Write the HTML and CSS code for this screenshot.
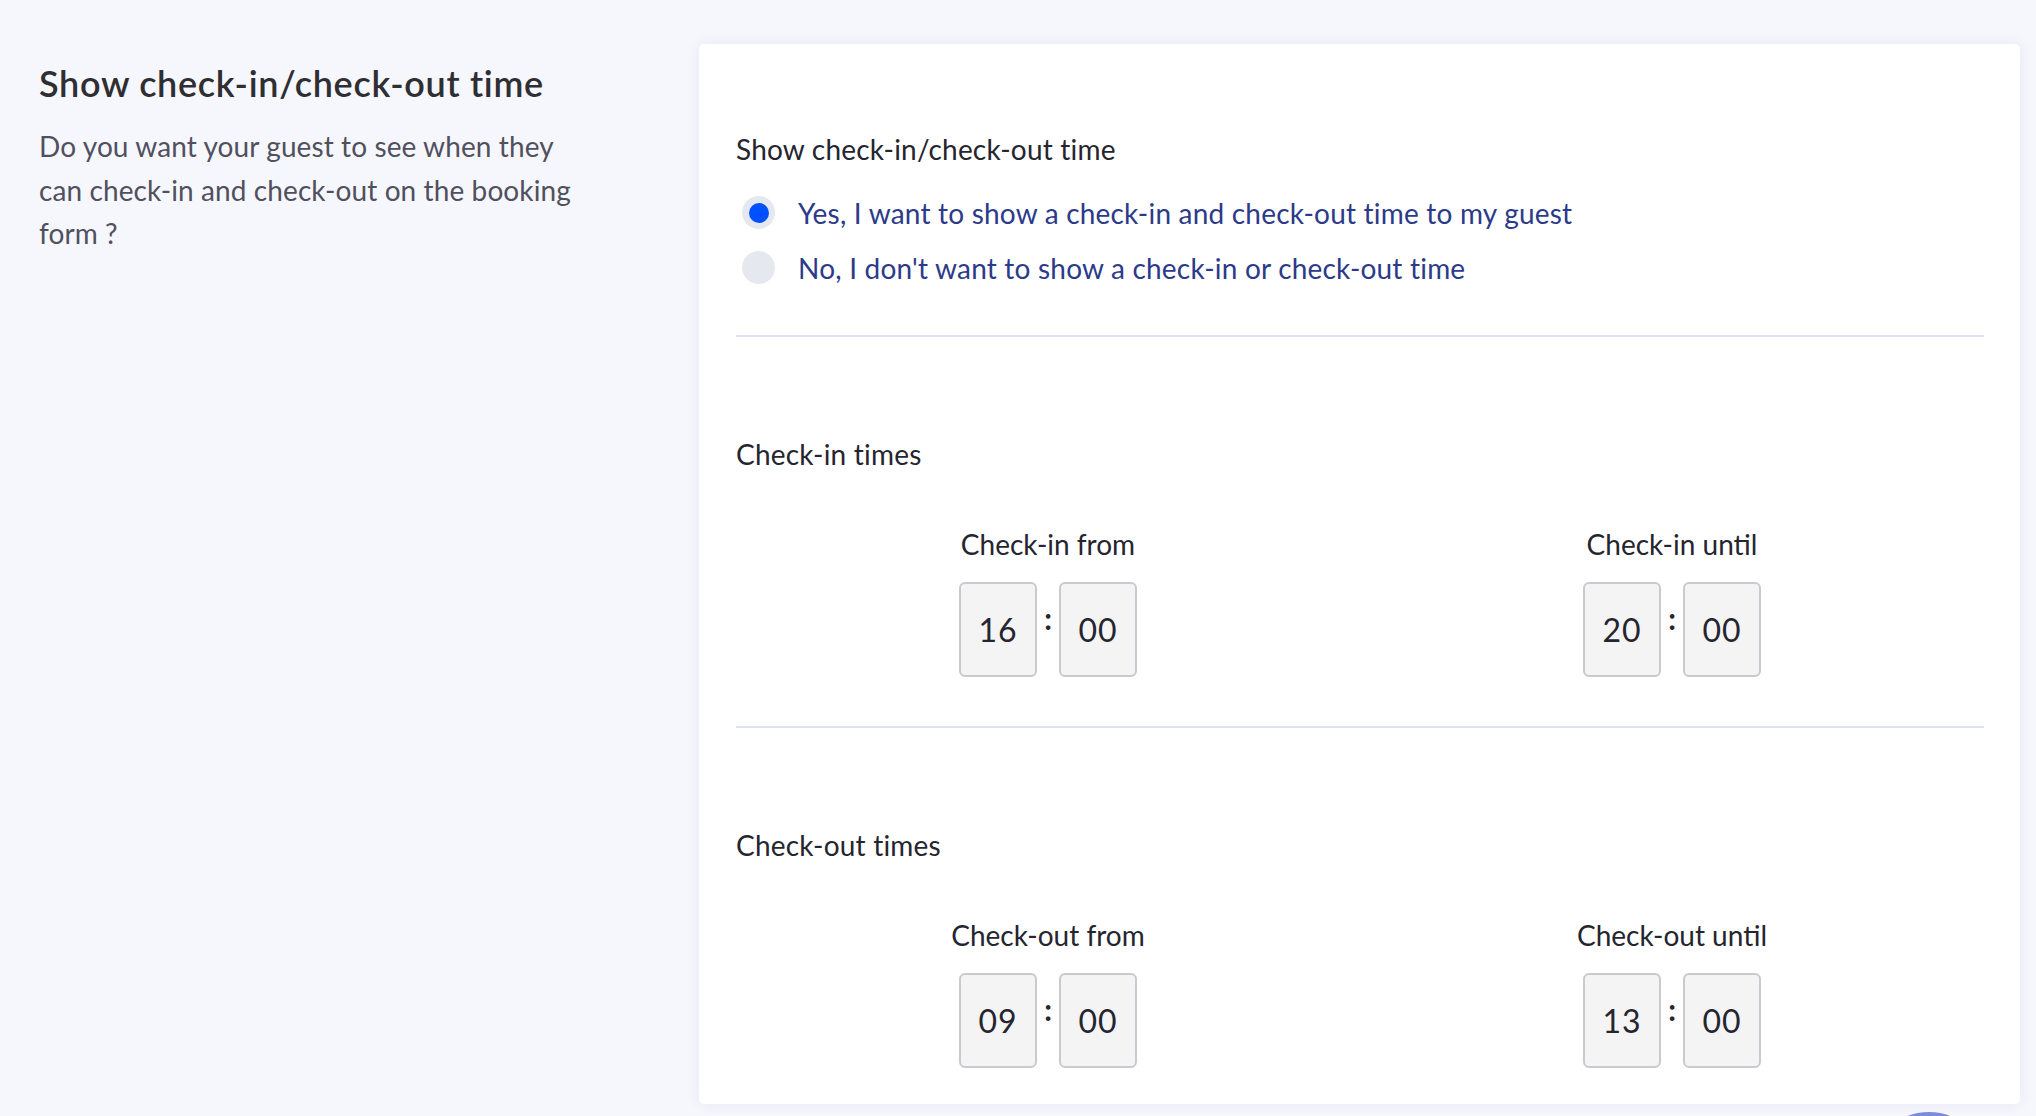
FILE: index.html
```html
<!DOCTYPE html>
<html lang="en">
<head>
<meta charset="utf-8">
<title>Check-in / check-out time</title>
<link rel="stylesheet" href="styles.css">
</head>
<body>
<div class="page">
  <aside class="intro">
    <h2 class="intro-title">Show check-in/check-out time</h2>
    <p class="intro-text">Do you want your guest to see when they can check-in and check-out on the booking form ?</p>
  </aside>
  <main class="card">
    <div class="field-label">Show check-in/check-out time</div>
    <div class="radios">
      <label class="radio-row">
        <span class="radio radio-checked"><span class="radio-dot"></span></span>
        <span class="radio-text">Yes, I want to show a check-in and check-out time to my guest</span>
      </label>
      <label class="radio-row">
        <span class="radio"></span>
        <span class="radio-text">No, I don't want to show a check-in or check-out time</span>
      </label>
    </div>
    <hr class="divider">
    <section class="times">
      <div class="section-title">Check-in times</div>
      <div class="time-cols">
        <div class="time-group">
          <div class="time-label">Check-in from</div>
          <div class="time-inputs">
            <span class="time-box">16</span><span class="colon">:</span><span class="time-box">00</span>
          </div>
        </div>
        <div class="time-group">
          <div class="time-label">Check-in until</div>
          <div class="time-inputs">
            <span class="time-box">20</span><span class="colon">:</span><span class="time-box">00</span>
          </div>
        </div>
      </div>
    </section>
    <hr class="divider">
    <section class="times">
      <div class="section-title">Check-out times</div>
      <div class="time-cols">
        <div class="time-group">
          <div class="time-label">Check-out from</div>
          <div class="time-inputs">
            <span class="time-box">09</span><span class="colon">:</span><span class="time-box">00</span>
          </div>
        </div>
        <div class="time-group">
          <div class="time-label">Check-out until</div>
          <div class="time-inputs">
            <span class="time-box">13</span><span class="colon">:</span><span class="time-box">00</span>
          </div>
        </div>
      </div>
    </section>
  </main>
</div>
<div class="fab"></div>
</body>
</html>
```

FILE: styles.css
```css
* { box-sizing: border-box; }
html, body { margin: 0; padding: 0; }
body {
  background: #f6f7fc;
  font-family: Lato, "Liberation Sans", sans-serif;
  color: #25252f;
  overflow: hidden;
  height: 1116px;
}
.page {
  display: grid;
  grid-template-columns: 699px 1fr;
  padding-right: 16px;
}
.intro {
  padding: 62px 39px 0 39px;
}
.intro-title {
  margin: 0;
  font-size: 36px;
  line-height: 42px;
  font-weight: 600;
  letter-spacing: 0.7px;
  color: #2e2e33;
}
.intro-text {
  margin: 21px 0 0 0;
  width: 552px;
  font-size: 28px;
  line-height: 43.5px;
  letter-spacing: 0.1px;
  color: #50505e;
}
.card {
  margin-top: 44px;
  background: #ffffff;
  border-radius: 5px;
  box-shadow: 0 0 14px rgba(40, 50, 110, 0.08);
  padding: 89px 36px 37px 37px;
  height: 1060px;
}
.field-label {
  font-size: 28px;
  line-height: 32px;
  letter-spacing: 0.2px;
  color: #25252f;
}
.radios {
  margin-top: 20px;
}
.radio-row {
  display: flex;
  align-items: center;
  height: 55px;
  gap: 23px;
  padding-left: 6px;
}
.radio {
  width: 33px;
  height: 33px;
  border-radius: 50%;
  background: #e5e9ef;
  display: flex;
  align-items: center;
  justify-content: center;
  flex: none;
}
.radio-dot {
  width: 20px;
  height: 20px;
  border-radius: 50%;
  background: #0050ff;
}
.radio-text {
  font-size: 28px;
  letter-spacing: 0.2px;
  color: #2c3a8a;
}
.divider {
  margin: 40px 0 0 0;
  border: 0;
  height: 2px;
  background: #dde3f3;
}
.times + .divider {
  margin-top: 49px;
}
.section-title {
  margin-top: 101px;
  font-size: 28px;
  line-height: 32px;
  letter-spacing: 0.2px;
}
.time-cols {
  display: grid;
  grid-template-columns: 1fr 1fr;
  margin-top: 58px;
}
.time-group {
  display: flex;
  flex-direction: column;
  align-items: center;
}
.time-label {
  font-size: 28px;
  line-height: 32px;
}
.time-inputs {
  display: flex;
  margin-top: 22px;
}
.time-box {
  width: 78px;
  height: 95px;
  border: 2px solid #c9c9d0;
  border-radius: 6px;
  background: #f4f4f5;
  display: flex;
  align-items: center;
  justify-content: center;
  font-size: 32px;
  letter-spacing: 1px;
  color: #25252f;
}
.colon {
  width: 22px;
  text-align: center;
  font-size: 30px;
  font-weight: 700;
  line-height: 28px;
  margin-top: 22px;
  height: 28px;
  color: #25252f;
}
.fab {
  position: fixed;
  left: 1870px;
  top: 1112px;
  width: 118px;
  height: 118px;
  border-radius: 50%;
  background: #7b8bd9;
}
```
